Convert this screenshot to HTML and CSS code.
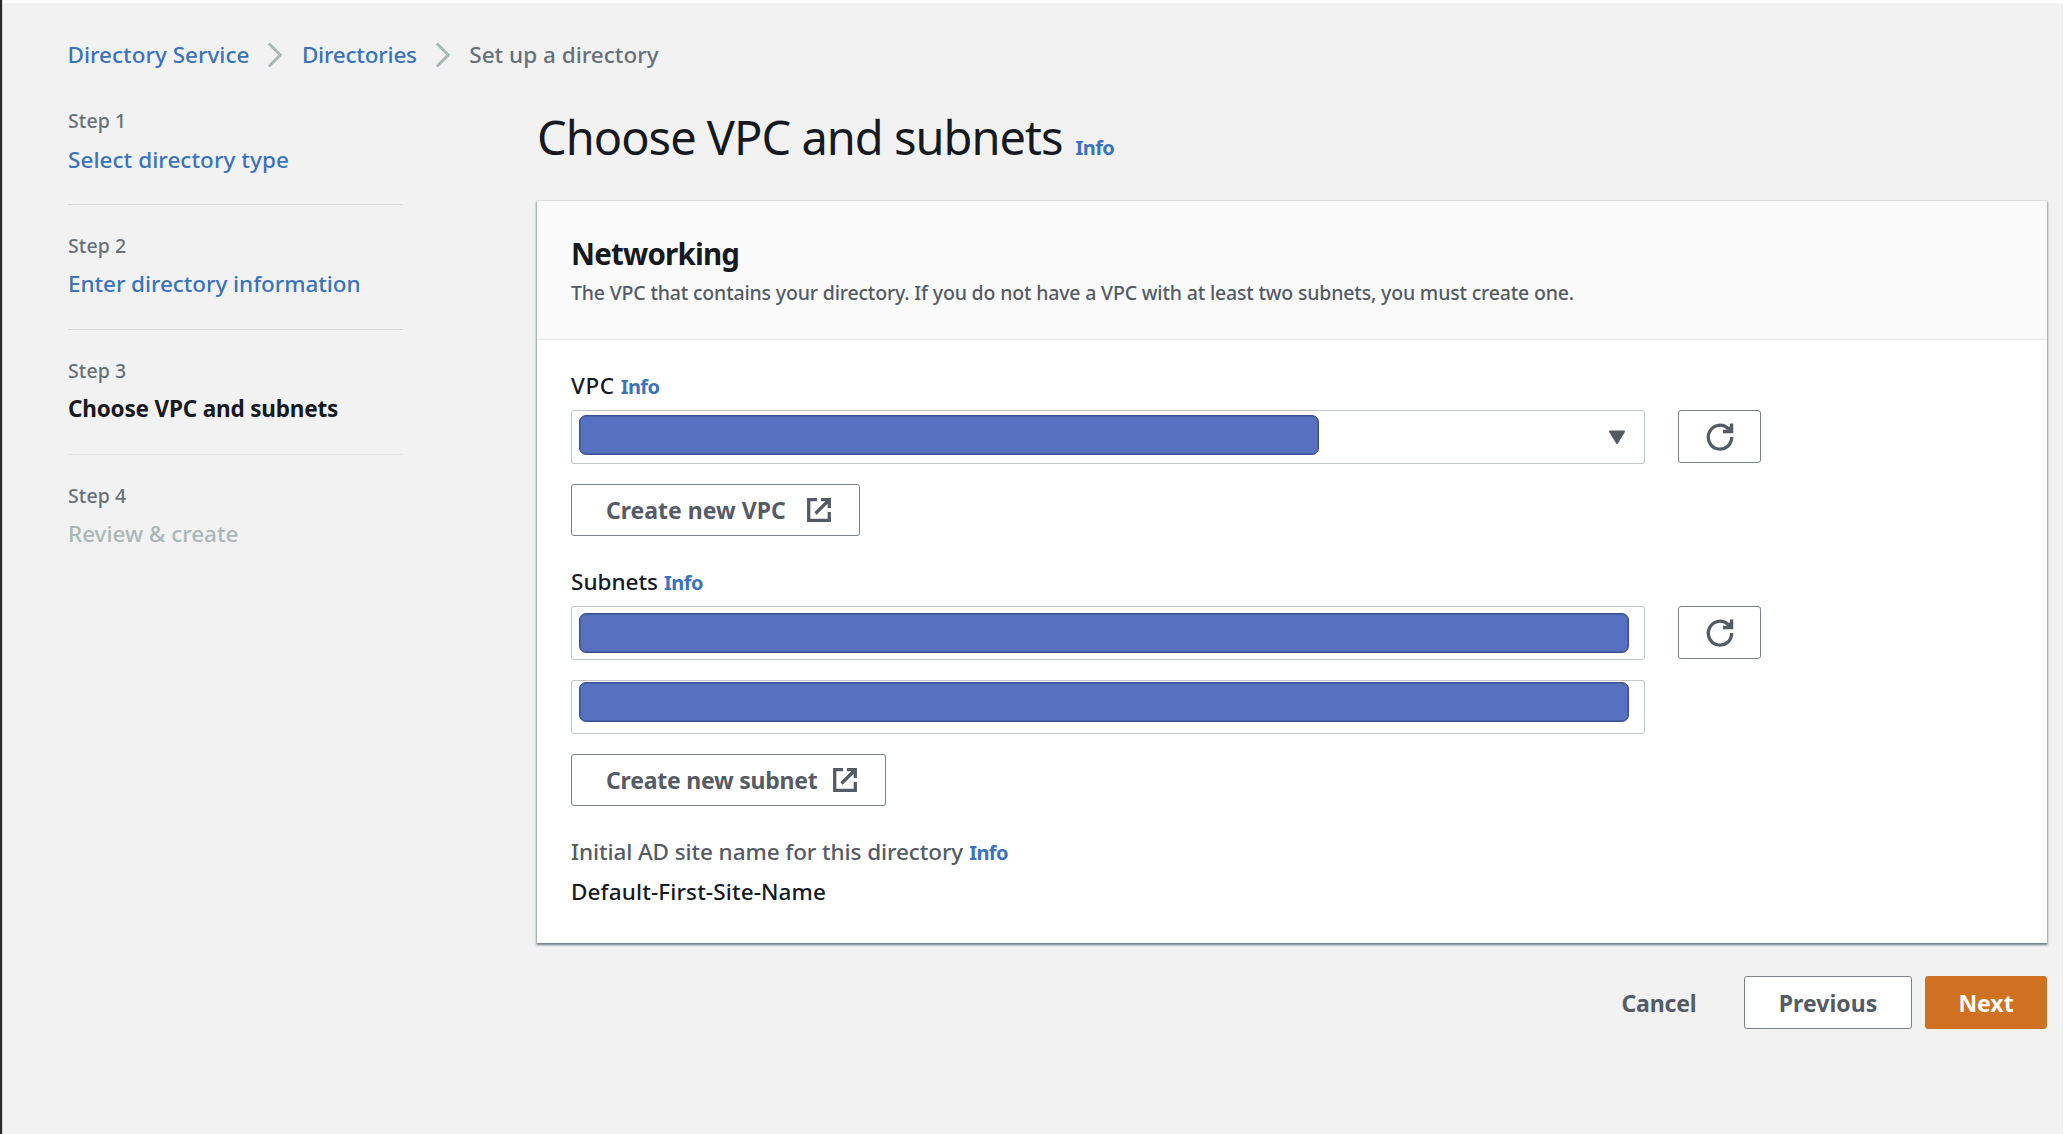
FILE: index.html
```html
<!DOCTYPE html>
<html lang="en">
<head>
<meta charset="utf-8">
<title>Set up a directory</title>
<link rel="stylesheet" href="styles.css">
</head>
<body>
<svg class="sprite" aria-hidden="true">
  <symbol id="chevron" viewBox="0 0 16 26"><path d="M1.800 1.500 13.300 13 1.800 24.500" fill="none" stroke="currentColor" stroke-width="3"/></symbol>
  <symbol id="external" viewBox="0 0 24 24"><path d="M10 1.700H1.700V22.300H22.300V14M14 1.700H22.300V10M21.500 2.500 8.500 15.500" fill="none" stroke="currentColor" stroke-width="3.300"/><path d="M17 2H22V7Z" fill="currentColor"/></symbol>
  <symbol id="refresh" viewBox="0 0 28 28"><path d="M25.700 14A11.700 12 0 1 1 22.300 5.700M25.600 .5V8.500H17" fill="none" stroke="currentColor" stroke-width="3.300"/><path d="M20.500 5 25 3V8H22Z" fill="currentColor"/></symbol>
  <symbol id="caret" viewBox="0 0 18 15"><path d="M2 1.500H16L9 13Z" fill="currentColor" stroke="currentColor" stroke-width="2" stroke-linejoin="round"/></symbol>
</svg>
<div class="page">
  <nav class="breadcrumbs">
    <a href="#">Directory Service</a>
    <svg class="chevron"><use href="#chevron"/></svg>
    <a href="#" class="crumb-mid">Directories</a>
    <svg class="chevron"><use href="#chevron"/></svg>
    <span class="crumb-current">Set up a directory</span>
  </nav>
  <div class="wizard">
    <ol class="steps">
      <li class="step"><span class="step-label">Step 1</span><a class="step-name step-one" href="#">Select directory type</a></li>
      <li class="step"><span class="step-label">Step 2</span><a class="step-name" href="#">Enter directory information</a></li>
      <li class="step"><span class="step-label">Step 3</span><span class="step-name active">Choose VPC and subnets</span></li>
      <li class="step"><span class="step-label">Step 4</span><span class="step-name disabled">Review &amp; create</span></li>
    </ol>
    <main>
      <h1>Choose VPC and subnets <a class="info" href="#">Info</a></h1>
      <section class="card">
        <header class="card-header">
          <h2>Networking</h2>
          <p>The VPC that contains your directory. If you do not have a VPC with at least two subnets, you must create one.</p>
        </header>
        <div class="card-body">
          <div class="label"><span class="vpc">VPC</span><a class="info" href="#">Info</a></div>
          <div class="row">
            <div class="field select"><span class="mask mask-short"></span><svg class="caret"><use href="#caret"/></svg></div>
            <button class="btn refresh" aria-label="Refresh"><svg><use href="#refresh"/></svg></button>
          </div>
          <button class="btn create create-vpc"><span>Create new VPC</span><svg><use href="#external"/></svg></button>
          <div class="label subnets-label"><span>Subnets</span><a class="info" href="#">Info</a></div>
          <div class="row">
            <div class="field first"><span class="mask"></span></div>
            <button class="btn refresh" aria-label="Refresh"><svg><use href="#refresh"/></svg></button>
          </div>
          <div class="field second"><span class="mask"></span></div>
          <button class="btn create create-subnet"><span>Create new subnet</span><svg><use href="#external"/></svg></button>
          <div class="label site-label"><span>Initial AD site name for this directory</span><a class="info" href="#">Info</a></div>
          <div class="site-name">Default-First-Site-Name</div>
        </div>
      </section>
      <footer class="actions">
        <button class="btn link">Cancel</button>
        <button class="btn previous">Previous</button>
        <button class="btn primary">Next</button>
      </footer>
    </main>
  </div>
</div>
</body>
</html>
```
FILE: styles.css
```css
* { box-sizing: border-box; }
body {
  margin: 0;
  height: 1134px;
  overflow: hidden;
  padding: 3px 7px 0 0;
  background: linear-gradient(90deg, #29292b 2px, #d8d9d9 2px 3px, #fff 3px);
  font: 500 22.5px/32px "Noto Sans", sans-serif;
  color: #16191f;
}
h1, h2, p, ol { margin: 0; padding: 0; }
a { color: #3a72bd; text-decoration: none; }
.sprite { position: absolute; width: 0; height: 0; }

.page {
  margin-left: 3px;
  height: 1131px;
  padding: 36px 16px 0 64px;
  background: #f2f2f2;
}
.breadcrumbs { display: flex; align-items: center; height: 32px; margin-left: .5px; }
.chevron { width: 16px; height: 26px; margin: 0 18.5px 0 18px; color: #aab7b8; }
.crumb-mid { letter-spacing: -.22px; }
.crumb-current { color: #687078; letter-spacing: 0; }

.wizard {
  display: grid;
  grid-template-columns: 335px 1510px;
  column-gap: 134px;
  margin: 35px 0 0 1px;
}
.steps { list-style: none; }
.step { height: 125px; padding-top: 1px; }
.step:not(:last-child) { border-bottom: 1px solid #d5dbdb; margin-bottom: 26px; height: 99px; }
.step:nth-child(3) { border-bottom-color: #e3e7e7; }
.step-label {
  display: block;
  font-size: 19.5px;
  line-height: 28px;
  letter-spacing: .1px;
  color: #687078;
}
.step-name { display: block; margin-top: 8px; letter-spacing: -.07px; }
.step-one { letter-spacing: .05px; margin-top: 9px; }
.active { font-weight: 700; letter-spacing: -.18px; }
.disabled { color: #aab7b8; letter-spacing: -.04px; }

h1 {
  display: flex;
  align-items: baseline;
  height: 60px;
  margin: 1px 0 34px;
  font-size: 47px;
  line-height: 60px;
  font-weight: 400;
  letter-spacing: -1px;
}
.info { font-size: 20px; font-weight: 700; letter-spacing: -.55px; }
h1 .info { margin-left: 13px; }
.card {
  height: 742px;
  background: #fff;
  box-shadow: 0 1px 2px 1px rgba(0, 28, 36, .3), 0 2px 2px rgba(0, 28, 36, .3);
  clip-path: inset(-1px -3px -6px -3px);
}
.card-header {
  height: 139px;
  padding: 33px 0 0 34px;
  background: #fafafa;
  border-bottom: 1px solid #e6e9e9;
}
h2 { font-size: 29.5px; line-height: 40px; letter-spacing: -.8px; }
.card-header p {
  margin-top: 5px;
  font-size: 19.5px;
  line-height: 28px;
  letter-spacing: -.17px;
  color: #545b64;
}
.card-body { padding: 30px 0 0 34px; }
.label { display: flex; align-items: baseline; gap: 6px; height: 32px; }
.vpc { letter-spacing: .6px; }
.row { display: flex; gap: 33px; margin-top: 8px; align-items: flex-start; }
.field {
  display: flex;
  align-items: flex-start;
  width: 1074px;
  height: 54px;
  border: 1px solid #bec8c8;
  border-radius: 3px;
  background: #fff;
}
.mask {
  width: 1050px;
  height: 40px;
  margin: 6px 0 0 7px;
  border: 1.5px solid #3a5192;
  border-radius: 7px;
  background: #5671c0;
  box-shadow: inset 0 0 0 .5px #3a5192;
}
.mask-short { width: 740px; margin-top: 4px; }
.caret { width: 18px; height: 15px; margin: 19px 18px 0 auto; color: #545b64; }
.second { margin-top: 20px; }
.second .mask { margin-top: 1px; }

.btn {
  display: flex;
  align-items: center;
  justify-content: center;
  height: 53px;
  padding: 0;
  border: 1px solid #7c828a;
  border-radius: 3px;
  background: #fff;
  color: #545b64;
  font: 700 23px/32px "Noto Sans", sans-serif;
}
.refresh { width: 83px; }
.refresh svg { width: 28px; height: 28px; }
.create { justify-content: space-between; margin-top: 20px; height: 52px; padding: 0 28px 0 34px; }
.create svg { width: 24px; height: 24px; }
.create-vpc { width: 289px; }
.create-subnet { width: 315px; letter-spacing: -.23px; }
.subnets-label { margin-top: 30px; }
.site-label { margin-top: 30px; color: #545b64; letter-spacing: -.09px; }
.site-name { margin-top: 8px; letter-spacing: .12px; }

.actions { display: flex; justify-content: flex-end; margin-top: 33px; }
.link { width: 104px; margin-right: 33px; border: 0; background: none; letter-spacing: -.16px; }
.previous { width: 168px; margin-right: 13px; letter-spacing: .05px; }
.primary { width: 122px; border-color: #d07021; background: #d07021; color: #fff; }
```
